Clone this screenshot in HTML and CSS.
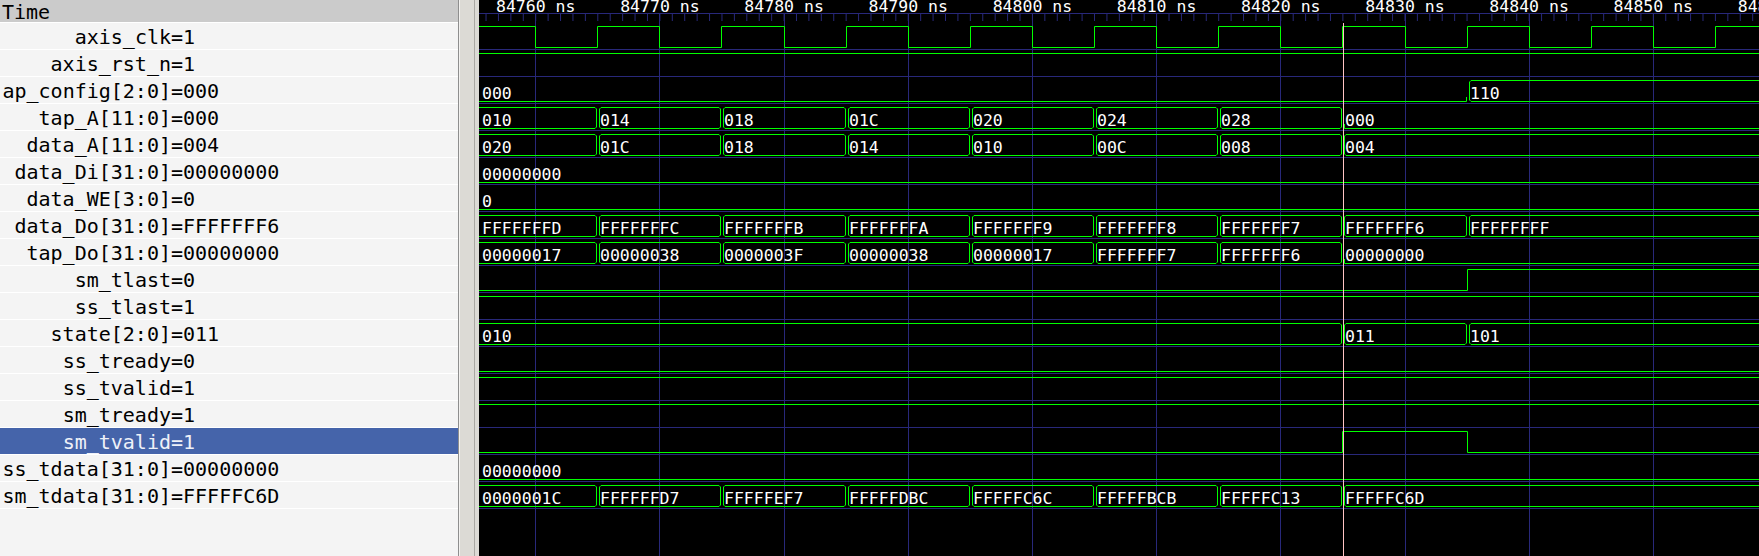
FILE: index.html
```html
<!DOCTYPE html>
<html>
<head>
<meta charset="utf-8">
<title>GTKWave</title>
<link rel="stylesheet" href="styles.css">
</head>
<body>
<div class="app">
  <div class="names">
    <div class="hdr">Time</div>
    <div class="row"><span class="nm">axis_clk</span><span>=1</span></div>
    <div class="row"><span class="nm">axis_rst_n</span><span>=1</span></div>
    <div class="row"><span class="nm">ap_config[2:0]</span><span>=000</span></div>
    <div class="row"><span class="nm">tap_A[11:0]</span><span>=000</span></div>
    <div class="row"><span class="nm">data_A[11:0]</span><span>=004</span></div>
    <div class="row"><span class="nm">data_Di[31:0]</span><span>=00000000</span></div>
    <div class="row"><span class="nm">data_WE[3:0]</span><span>=0</span></div>
    <div class="row"><span class="nm">data_Do[31:0]</span><span>=FFFFFFF6</span></div>
    <div class="row"><span class="nm">tap_Do[31:0]</span><span>=00000000</span></div>
    <div class="row"><span class="nm">sm_tlast</span><span>=0</span></div>
    <div class="row"><span class="nm">ss_tlast</span><span>=1</span></div>
    <div class="row"><span class="nm">state[2:0]</span><span>=011</span></div>
    <div class="row"><span class="nm">ss_tready</span><span>=0</span></div>
    <div class="row"><span class="nm">ss_tvalid</span><span>=1</span></div>
    <div class="row"><span class="nm">sm_tready</span><span>=1</span></div>
    <div class="row sel"><span class="nm">sm_tvalid</span><span>=1</span></div>
    <div class="row"><span class="nm">ss_tdata[31:0]</span><span>=00000000</span></div>
    <div class="row"><span class="nm">sm_tdata[31:0]</span><span>=FFFFFC6D</span></div>
  </div>
  <div class="sep"></div>
  <div class="sep2"></div>
  <div class="waves">
    <svg class="wv" width="1280" height="556" viewBox="0 0 1280 556" xmlns="http://www.w3.org/2000/svg">
      <defs>
        <path id="a0" d="M0 3.5 H116 L117.5 5 V23 L116 24.5 H0"/>
        <path id="a1" d="M120.5 23 V5 L122 3.5 H240 L241.5 5 V23 L240 24.5 H122 Z"/>
        <path id="a2" d="M244.5 23 V5 L246 3.5 H365 L366.5 5 V23 L365 24.5 H246 Z"/>
        <path id="a3" d="M369.5 23 V5 L371 3.5 H489 L490.5 5 V23 L489 24.5 H371 Z"/>
        <path id="a4" d="M493.5 23 V5 L495 3.5 H613 L614.5 5 V23 L613 24.5 H495 Z"/>
        <path id="a5" d="M617.5 23 V5 L619 3.5 H737 L738.5 5 V23 L737 24.5 H619 Z"/>
        <path id="a6" d="M741.5 23 V5 L743 3.5 H861 L862.5 5 V23 L861 24.5 H743 Z"/>
        <path id="a7" d="M865.5 23 V5 L867 3.5 H986 L987.5 5 V23 L986 24.5 H867 Z"/>
        <path id="e7" d="M1280 3.5 H867 L865.5 5 V23 L867 24.5 H1280"/>
        <path id="e8" d="M1280 3.5 H992 L990.5 5 V23 L992 24.5 H1280"/>
        <path id="b0" d="M0 3.5 H861 L862.5 5 V23 L861 24.5 H0"/>
        <path id="zw" d="M0 24.5 H1280"/>
        <path id="z7" d="M865.5 20 V24.5 H1280"/>
        <path id="zap" d="M0 24.5 H987.5 V20"/>
        <path id="hi" d="M0 3.5 H1280"/>
        <path id="lo" d="M0 24.5 H1280"/>
      </defs>

      <g class="grid">
        <path d="M0 13.5 H1280"/>
        <line class="ticks" x1="6.53" y1="17.5" x2="1280" y2="17.5"/>
        <path d="M56.5 13.5 V556 M180.5 13.5 V556 M305.5 13.5 V556 M429.5 13.5 V556 M553.5 13.5 V556 M677.5 13.5 V556 M801.5 13.5 V556 M926.5 13.5 V556 M1050.5 13.5 V556 M1174.5 13.5 V556"/>
        <path d="M0 49.5 H1280 M0 76.5 H1280 M0 103.5 H1280 M0 130.5 H1280 M0 157.5 H1280 M0 184.5 H1280 M0 211.5 H1280 M0 238.5 H1280 M0 265.5 H1280 M0 292.5 H1280 M0 319.5 H1280 M0 346.5 H1280 M0 373.5 H1280 M0 400.5 H1280 M0 427.5 H1280 M0 454.5 H1280 M0 481.5 H1280 M0 508.5 H1280"/>
      </g>

      <g class="tl">
        <text x="56.7" y="12">84760 ns</text>
        <text x="180.9" y="12">84770 ns</text>
        <text x="305.1" y="12">84780 ns</text>
        <text x="429.2" y="12">84790 ns</text>
        <text x="553.4" y="12">84800 ns</text>
        <text x="677.6" y="12">84810 ns</text>
        <text x="801.8" y="12">84820 ns</text>
        <text x="925.9" y="12">84830 ns</text>
        <text x="1050.1" y="12">84840 ns</text>
        <text x="1174.3" y="12">84850 ns</text>
        <text x="1298.5" y="12">84860 ns</text>
      </g>

      <!-- axis_clk -->
      <g class="sig" transform="translate(0,23)">
        <path d="M0 3.5 H56.5 V24.5 H118.5 V3.5 H180.5 V24.5 H242.5 V3.5 H305.5 V24.5 H367.5 V3.5 H429.5 V24.5 H491.5 V3.5 H553.5 V24.5 H615.5 V3.5 H677.5 V24.5 H739.5 V3.5 H801.5 V24.5 H863.5 V3.5 H926.5 V24.5 H988.5 V3.5 H1050.5 V24.5 H1112.5 V3.5 H1174.5 V24.5 H1236.5 V3.5 H1280"/>
      </g>
      <!-- axis_rst_n -->
      <g class="sig" transform="translate(0,50)"><use href="#hi"/></g>
      <!-- ap_config -->
      <g class="sig" transform="translate(0,77)">
        <use href="#zap"/><use href="#e8"/>
        <text x="3" y="21.5">000</text><text x="991" y="21.5">110</text>
      </g>
      <!-- tap_A -->
      <g class="sig" transform="translate(0,104)">
        <use href="#a0"/><use href="#a1"/><use href="#a2"/><use href="#a3"/><use href="#a4"/><use href="#a5"/><use href="#a6"/><use href="#z7"/>
        <text x="3" y="21.5">010</text><text x="121" y="21.5">014</text><text x="245" y="21.5">018</text><text x="370" y="21.5">01C</text><text x="494" y="21.5">020</text><text x="618" y="21.5">024</text><text x="742" y="21.5">028</text><text x="866" y="21.5">000</text>
      </g>
      <!-- data_A -->
      <g class="sig" transform="translate(0,131)">
        <use href="#a0"/><use href="#a1"/><use href="#a2"/><use href="#a3"/><use href="#a4"/><use href="#a5"/><use href="#a6"/><use href="#e7"/>
        <text x="3" y="21.5">020</text><text x="121" y="21.5">01C</text><text x="245" y="21.5">018</text><text x="370" y="21.5">014</text><text x="494" y="21.5">010</text><text x="618" y="21.5">00C</text><text x="742" y="21.5">008</text><text x="866" y="21.5">004</text>
      </g>
      <!-- data_Di -->
      <g class="sig" transform="translate(0,158)">
        <use href="#zw"/><text x="3" y="21.5">00000000</text>
      </g>
      <!-- data_WE -->
      <g class="sig" transform="translate(0,185)">
        <use href="#zw"/><text x="3" y="21.5">0</text>
      </g>
      <!-- data_Do -->
      <g class="sig" transform="translate(0,212)">
        <use href="#a0"/><use href="#a1"/><use href="#a2"/><use href="#a3"/><use href="#a4"/><use href="#a5"/><use href="#a6"/><use href="#a7"/><use href="#e8"/>
        <text x="3" y="21.5">FFFFFFFD</text><text x="121" y="21.5">FFFFFFFC</text><text x="245" y="21.5">FFFFFFFB</text><text x="370" y="21.5">FFFFFFFA</text><text x="494" y="21.5">FFFFFFF9</text><text x="618" y="21.5">FFFFFFF8</text><text x="742" y="21.5">FFFFFFF7</text><text x="866" y="21.5">FFFFFFF6</text><text x="991" y="21.5">FFFFFFFF</text>
      </g>
      <!-- tap_Do -->
      <g class="sig" transform="translate(0,239)">
        <use href="#a0"/><use href="#a1"/><use href="#a2"/><use href="#a3"/><use href="#a4"/><use href="#a5"/><use href="#a6"/><use href="#z7"/>
        <text x="3" y="21.5">00000017</text><text x="121" y="21.5">00000038</text><text x="245" y="21.5">0000003F</text><text x="370" y="21.5">00000038</text><text x="494" y="21.5">00000017</text><text x="618" y="21.5">FFFFFFF7</text><text x="742" y="21.5">FFFFFFF6</text><text x="866" y="21.5">00000000</text>
      </g>
      <!-- sm_tlast -->
      <g class="sig" transform="translate(0,266)">
        <path d="M0 24.5 H988.5 V3.5 H1280"/>
      </g>
      <!-- ss_tlast -->
      <g class="sig" transform="translate(0,293)"><use href="#hi"/></g>
      <!-- state -->
      <g class="sig" transform="translate(0,320)">
        <use href="#b0"/><use href="#a7"/><use href="#e8"/>
        <text x="3" y="21.5">010</text><text x="866" y="21.5">011</text><text x="991" y="21.5">101</text>
      </g>
      <!-- ss_tready -->
      <g class="sig" transform="translate(0,347)"><use href="#lo"/></g>
      <!-- ss_tvalid -->
      <g class="sig" transform="translate(0,374)"><use href="#hi"/></g>
      <!-- sm_tready -->
      <g class="sig" transform="translate(0,401)"><use href="#hi"/></g>
      <!-- sm_tvalid -->
      <g class="sig" transform="translate(0,428)">
        <path d="M0 24.5 H863.5 V3.5 H988.5 V24.5 H1280"/>
      </g>
      <!-- ss_tdata -->
      <g class="sig" transform="translate(0,455)">
        <use href="#zw"/><text x="3" y="21.5">00000000</text>
      </g>
      <!-- sm_tdata -->
      <g class="sig" transform="translate(0,482)">
        <use href="#a0"/><use href="#a1"/><use href="#a2"/><use href="#a3"/><use href="#a4"/><use href="#a5"/><use href="#a6"/><use href="#e7"/>
        <text x="3" y="21.5">0000001C</text><text x="121" y="21.5">FFFFFFD7</text><text x="245" y="21.5">FFFFFEF7</text><text x="370" y="21.5">FFFFFDBC</text><text x="494" y="21.5">FFFFFC6C</text><text x="618" y="21.5">FFFFFBCB</text><text x="742" y="21.5">FFFFFC13</text><text x="866" y="21.5">FFFFFC6D</text>
      </g>

      <path class="marker" d="M864.5 23 V556"/>
    </svg>
  </div>
</div>
</body>
</html>
```

FILE: styles.css
```css
html, body {
  margin: 0;
  padding: 0;
}
body {
  width: 1759px;
  height: 556px;
  overflow: hidden;
  background: #000;
}
.app {
  display: flex;
  height: 556px;
}
.names {
  flex: none;
  width: 458px;
  height: 556px;
  background: #f4f4f4;
  border-right: 1px solid #8e8e8e;
  font: 20px "DejaVu Sans Mono", monospace;
  color: #000;
  overflow: hidden;
}
.hdr {
  height: 22px;
  line-height: 25px;
  background: #cbcbcb;
  border-bottom: 1px solid #ffffff;
  padding-left: 2px;
  white-space: pre;
  overflow: hidden;
}
.row {
  display: flex;
  height: 26px;
  line-height: 29px;
  border-bottom: 1px solid #ffffff;
  white-space: pre;
}
.row .nm {
  flex: none;
  width: 171px;
  text-align: right;
}
.row.sel {
  background: #4564aa;
  color: #eef1f8;
}
.sep {
  flex: none;
  width: 14px;
  background: #dcdad5;
  border-left: 1px solid #f3f2f0;
  border-right: 1px solid #a9a7a2;
}
.sep2 {
  flex: none;
  width: 4px;
  background: #dcdad5;
}
.waves {
  flex: none;
  width: 1280px;
  height: 556px;
  background: #000;
}
.wv {
  display: block;
}
.wv text {
  font-family: "DejaVu Sans Mono", monospace;
  font-size: 16.5px;
  fill: #ffffff;
  stroke: none;
}
.grid path,
.grid line {
  fill: none;
  stroke: #28287a;
  stroke-width: 1;
}
.grid .ticks {
  stroke-width: 7;
  stroke-dasharray: 1 11.418;
}
.tl text {
  text-anchor: middle;
}
.sig {
  fill: none;
  stroke: #00ff00;
  stroke-width: 1;
}
.marker {
  fill: none;
  stroke: #ffc4c4;
  stroke-width: 1;
}
```
